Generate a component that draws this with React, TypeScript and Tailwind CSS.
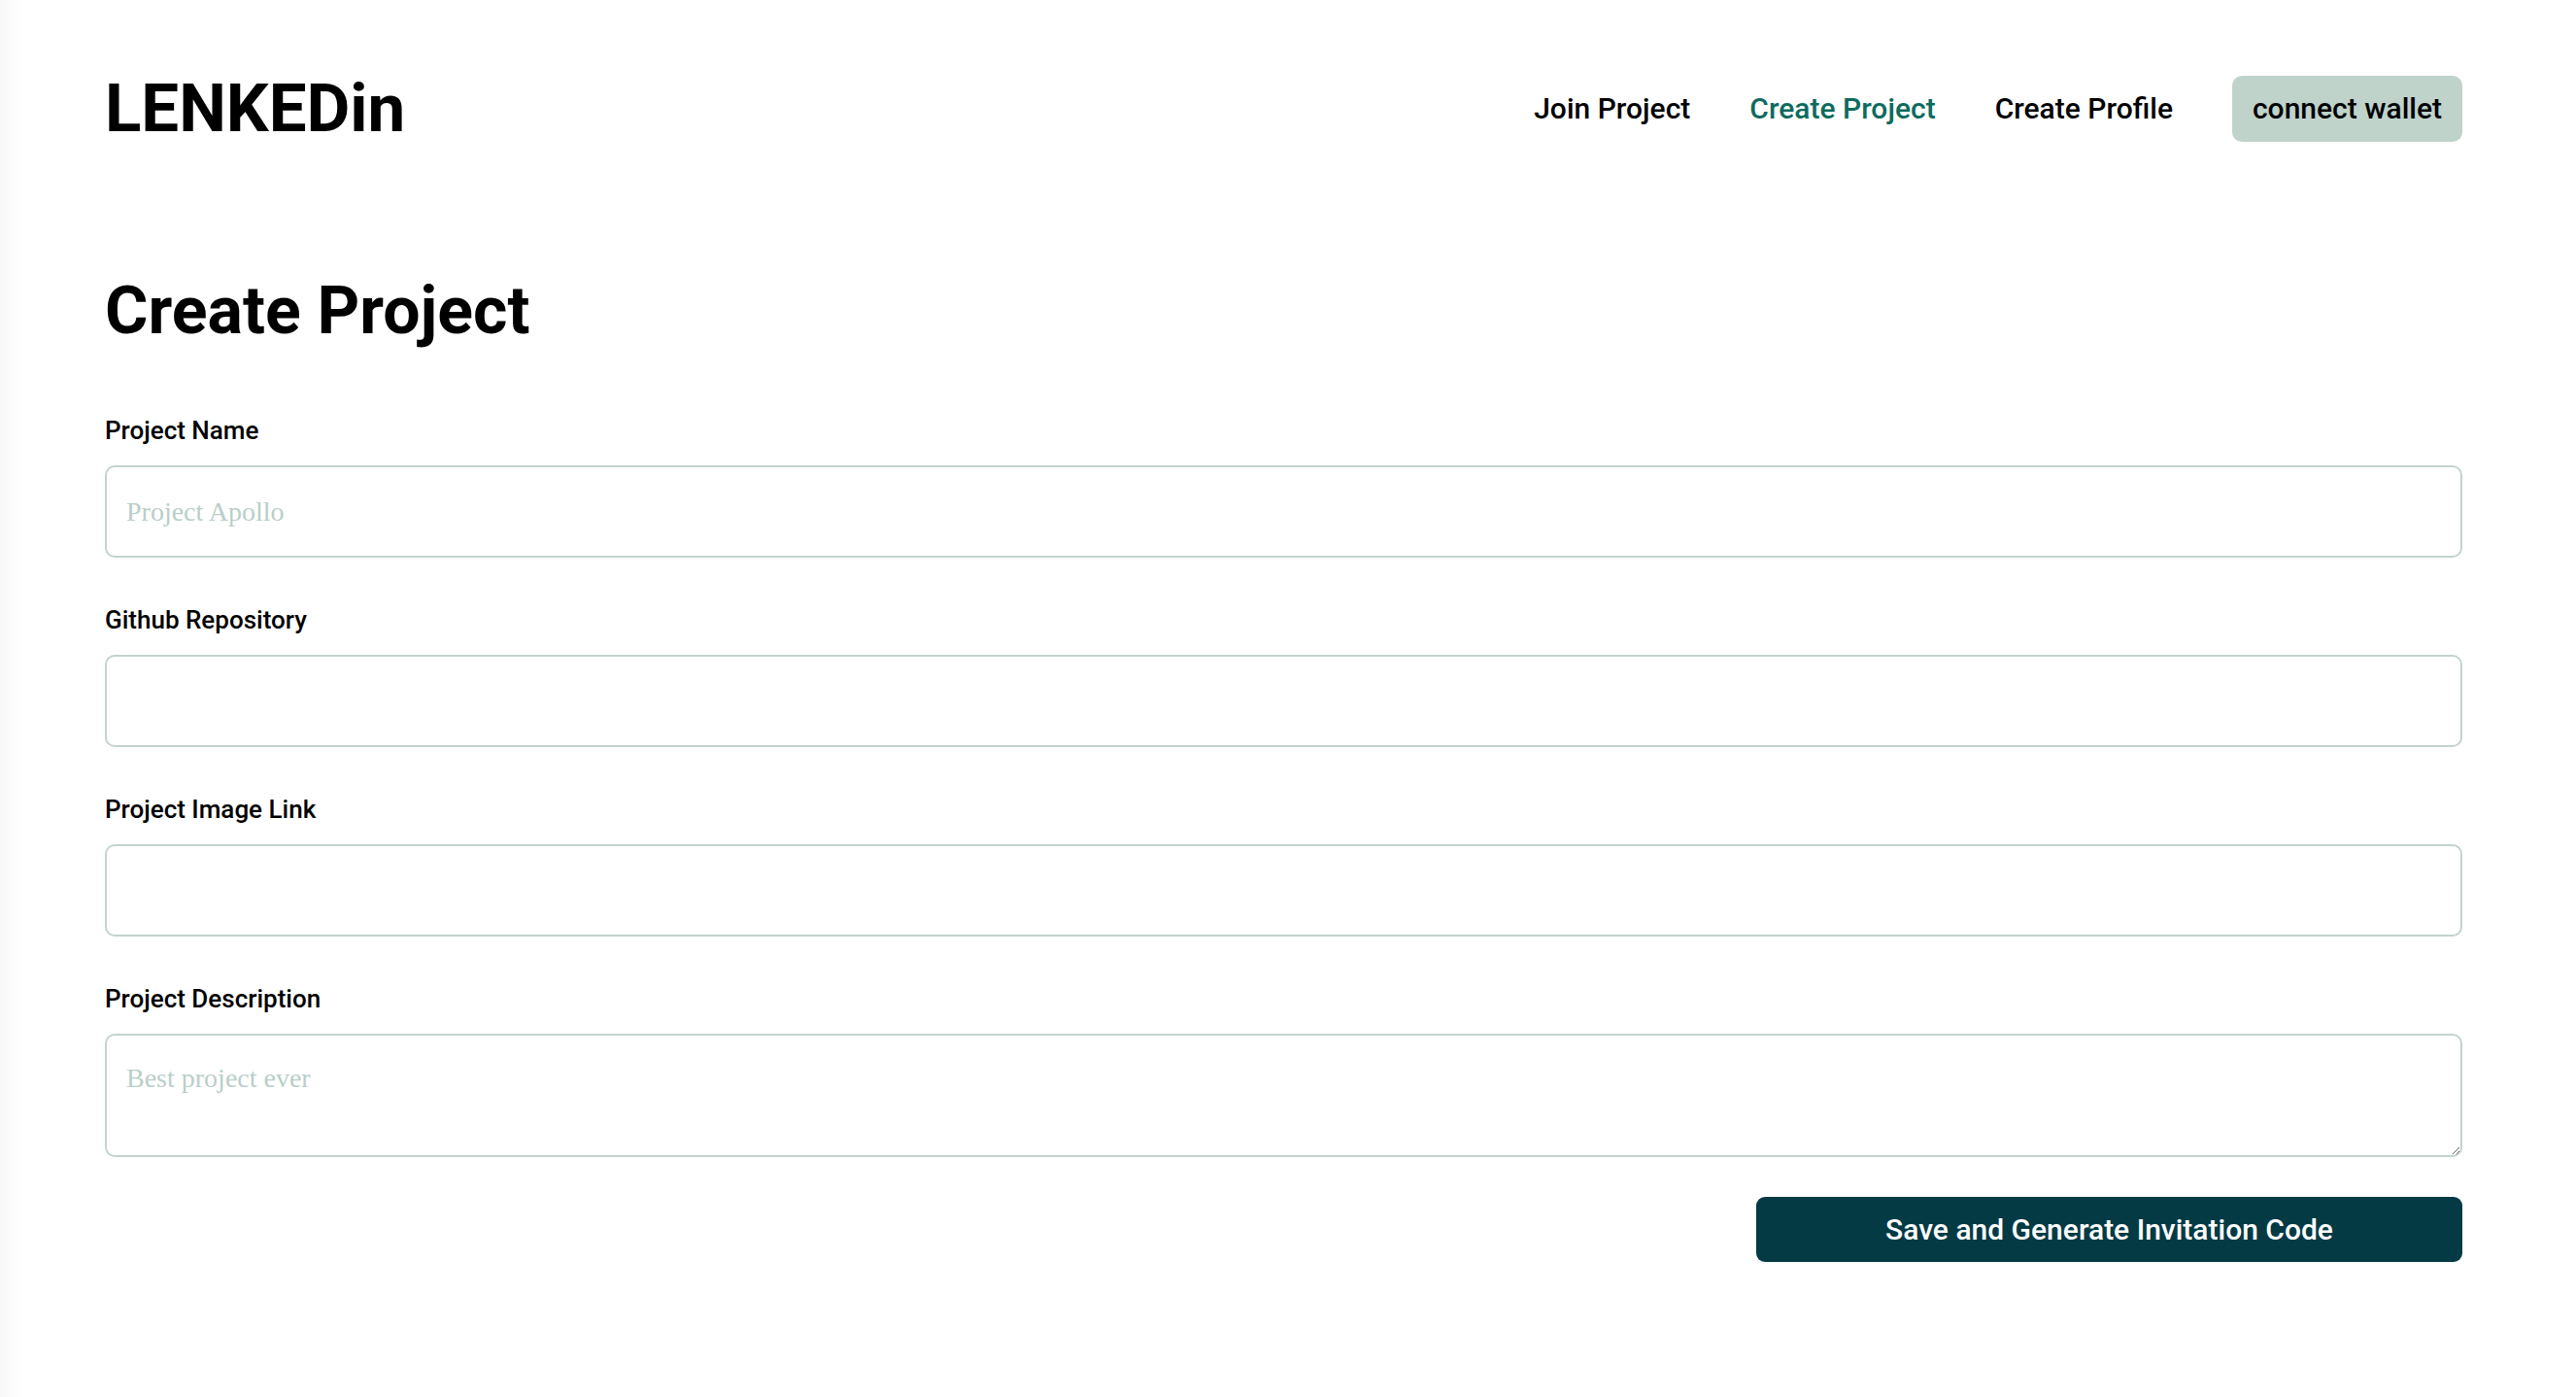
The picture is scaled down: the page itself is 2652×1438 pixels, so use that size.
import React from "react";

const font = { fontFamily: "Roboto, 'Liberation Sans', sans-serif" };

function Field({
  label,
  placeholder,
  textarea,
}: {
  label: string;
  placeholder?: string;
  textarea?: boolean;
}) {
  return (
    <div className="flex flex-col">
      <label className="text-[26px] font-medium leading-none text-black mb-[23px]">{label}</label>
      {textarea ? (
        <textarea
          placeholder={placeholder}
          className="h-[127px] w-full rounded-[10px] border-2 border-[#c3d3ce] bg-white px-[20px] pt-[24px] text-[28px] leading-[40px] text-black outline-none placeholder:text-[#b9cec8]"
          style={{ fontFamily: "'Liberation Serif', serif" }}
        />
      ) : (
        <input
          type="text"
          placeholder={placeholder}
          className="h-[95px] w-full rounded-[10px] border-2 border-[#c3d3ce] bg-white px-[20px] text-[28px] text-black outline-none placeholder:text-[#b9cec8]"
          style={{ fontFamily: "'Liberation Serif', serif" }}
        />
      )}
    </div>
  );
}

export default function App() {
  return (
    <div
      className="min-h-[1438px] w-full bg-white pl-[108px] pr-[117px] pt-[77px] shadow-[inset_26px_0_22px_-16px_rgba(0,0,0,0.035)]"
      style={font}
    >
      <header className="flex items-center justify-between">
        <div className="text-[69px] font-bold leading-none text-black">LENKEDin</div>
        <nav className="flex items-center gap-[61px] text-[30px] font-medium leading-none">
          <a className="text-black">Join Project</a>
          <a className="text-[#0d6b5e]">Create Project</a>
          <a className="text-black">Create Profile</a>
          <button className="flex h-[68px] items-center rounded-[10px] bg-[#bfd3cb] px-[21px] text-[30px] font-medium leading-none text-black">
            connect wallet
          </button>
        </nav>
      </header>

      <h1 className="mt-[140px] text-[68px] font-bold leading-none text-black">Create Project</h1>

      <form className="mt-[76px] flex flex-col gap-[51px]">
        <Field label="Project Name" placeholder="Project Apollo" />
        <Field label="Github Repository" />
        <Field label="Project Image Link" />
        <Field label="Project Description" placeholder="Best project ever" textarea />
      </form>

      <div className="mt-[41px] flex justify-end">
        <button className="flex h-[67px] w-[727px] items-center justify-center rounded-[9px] bg-[#033a44] text-[30px] font-medium leading-none text-white">
          Save and Generate Invitation Code
        </button>
      </div>
    </div>
  );
}
